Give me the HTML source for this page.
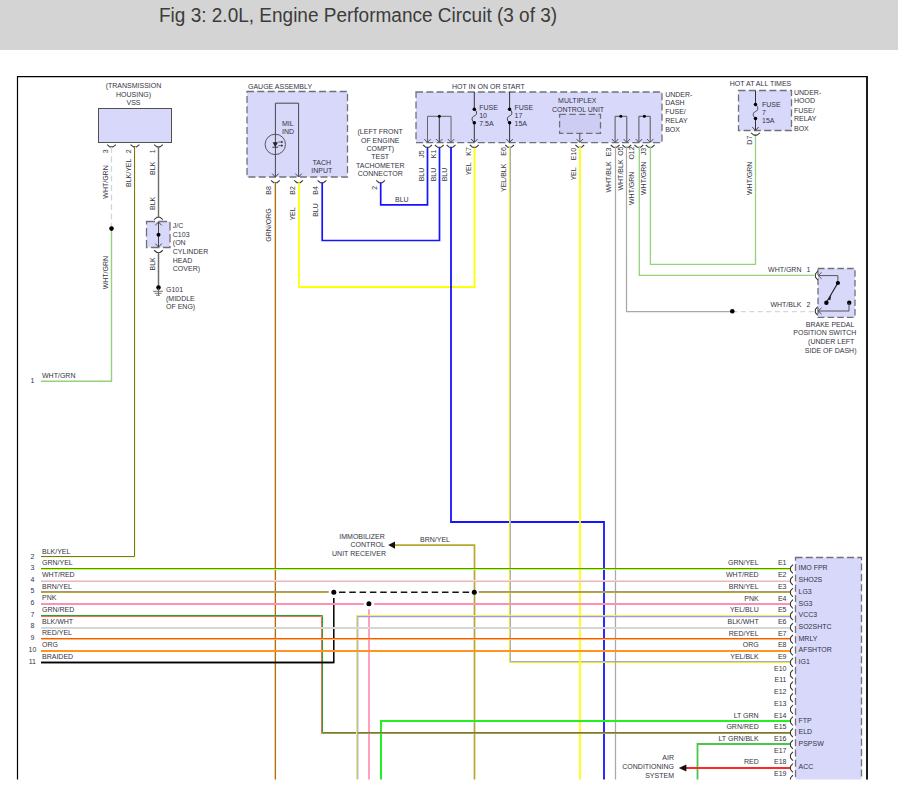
<!DOCTYPE html>
<html><head><meta charset="utf-8"><style>
html,body{margin:0;padding:0;background:#fff;}
body{width:898px;height:798px;overflow:hidden;position:relative;font-family:"Liberation Sans",sans-serif;}
#hdr{position:absolute;left:0;top:0;width:898px;height:50px;background:#d4d4d4;}
#title{position:absolute;left:158.5px;top:3px;font-size:20px;line-height:24px;color:#3c3c3c;white-space:nowrap;transform:scaleX(0.95);transform-origin:0 0;}
svg{position:absolute;left:0;top:0;}
svg text{font-family:"Liberation Sans",sans-serif;}
</style></head><body>
<div id="hdr"><div id="title">Fig 3: 2.0L, Engine Performance Circuit (3 of 3)</div></div>
<svg width="898" height="798" viewBox="0 0 898 798">
<defs><clipPath id="cl"><rect x="0" y="60" width="898" height="719.5"/></clipPath></defs>
<g clip-path="url(#cl)">
<path d="M17.5,900 L17.5,76.6 L867,76.6" fill="none" stroke="#000" stroke-width="1.2"/>
<path d="M867,76 L867,900" fill="none" stroke="#111" stroke-width="1.9"/>
<text x="133.50" y="88.00" text-anchor="middle" font-size="7" fill="#34343f">(TRANSMISSION</text>
<text x="133.50" y="96.70" text-anchor="middle" font-size="7" fill="#34343f">HOUSING)</text>
<text x="133.50" y="105.20" text-anchor="middle" font-size="7" fill="#34343f">VSS</text>
<rect x="98.5" y="108.5" width="73" height="34" fill="#d8d8fb" stroke="#505050" stroke-width="1"/>
<path d="M107.10,144.60 L109.90,146.90 L113.10,146.90 L115.90,144.60" fill="none" stroke="#3a3a3a" stroke-width="1.1" stroke-linejoin="round"/>
<path d="M130.60,144.60 L133.40,146.90 L136.60,146.90 L139.40,144.60" fill="none" stroke="#3a3a3a" stroke-width="1.1" stroke-linejoin="round"/>
<path d="M154.10,144.60 L156.90,146.90 L160.10,146.90 L162.90,144.60" fill="none" stroke="#3a3a3a" stroke-width="1.1" stroke-linejoin="round"/>
<text transform="translate(105.50,151.30) rotate(-90)" x="0" y="2.5" text-anchor="middle" font-size="7" fill="#34343f">3</text>
<text transform="translate(128.80,151.30) rotate(-90)" x="0" y="2.5" text-anchor="middle" font-size="7" fill="#34343f">2</text>
<text transform="translate(152.00,151.30) rotate(-90)" x="0" y="2.5" text-anchor="middle" font-size="7" fill="#34343f">1</text>
<text transform="translate(105.50,182.00) rotate(-90)" x="0" y="2.5" text-anchor="middle" font-size="7" fill="#34343f">WHT/GRN</text>
<text transform="translate(128.80,172.80) rotate(-90)" x="0" y="2.5" text-anchor="middle" font-size="7" fill="#34343f">BLK/YEL</text>
<text transform="translate(152.00,168.30) rotate(-90)" x="0" y="2.5" text-anchor="middle" font-size="7" fill="#34343f">BLK</text>
<text transform="translate(152.00,203.40) rotate(-90)" x="0" y="2.5" text-anchor="middle" font-size="7" fill="#34343f">BLK</text>
<polyline points="111.50,147.00 111.50,228.50" fill="none" stroke="#d4d4d4" stroke-width="1.3" stroke-linecap="butt" stroke-linejoin="miter" stroke-dasharray="6,3.5"/>
<polyline points="111.50,228.50 111.50,381.20 41.00,381.20" fill="none" stroke="#96d27e" stroke-width="1.4" stroke-linecap="butt" stroke-linejoin="miter"/>
<circle cx="111.5" cy="228.6" r="2.3" fill="#000"/>
<text transform="translate(105.50,272.60) rotate(-90)" x="0" y="2.5" text-anchor="middle" font-size="7" fill="#34343f">WHT/GRN</text>
<text x="42.00" y="378.00" text-anchor="start" font-size="7" fill="#34343f">WHT/GRN</text>
<text x="34.50" y="383.00" text-anchor="end" font-size="7" fill="#34343f">1</text>
<polyline points="134.50,146.80 134.50,556.50 41.00,556.50" fill="none" stroke="#707048" stroke-width="1.0" stroke-linecap="butt" stroke-linejoin="miter"/>
<polyline points="135.50,146.80 135.50,557.50 41.00,557.50" fill="none" stroke="#ffff9c" stroke-width="1.0" stroke-linecap="butt" stroke-linejoin="miter"/>
<polyline points="158.50,147.00 158.50,217.30" fill="none" stroke="#6c6c6c" stroke-width="1.4" stroke-linecap="butt" stroke-linejoin="miter"/>
<path d="M154.10,219.60 L156.90,217.30 L160.10,217.30 L162.90,219.60" fill="none" stroke="#3a3a3a" stroke-width="1.1" stroke-linejoin="round"/>
<rect x="146.5" y="221.5" width="23.50" height="26.00" fill="#d8d8fb" stroke="#707078" stroke-width="1.3" stroke-dasharray="8.5,3.5"/>
<polyline points="158.50,221.80 158.50,247.00" fill="none" stroke="#444" stroke-width="1" stroke-linecap="butt" stroke-linejoin="miter"/>
<path d="M155.30,225.40 L158.50,222.00 L161.70,225.40" fill="none" stroke="#444" stroke-width="1"/>
<path d="M155.30,243.60 L158.50,247.00 L161.70,243.60" fill="none" stroke="#444" stroke-width="1"/>
<circle cx="158.5" cy="234.7" r="2.0" fill="#000"/>
<path d="M154.10,250.20 L156.90,252.50 L160.10,252.50 L162.90,250.20" fill="none" stroke="#3a3a3a" stroke-width="1.1" stroke-linejoin="round"/>
<polyline points="158.50,252.60 158.50,287.00" fill="none" stroke="#6c6c6c" stroke-width="1.5" stroke-linecap="butt" stroke-linejoin="miter"/>
<text x="172.80" y="228.30" text-anchor="start" font-size="7" fill="#34343f">J/C</text>
<text x="172.80" y="236.85" text-anchor="start" font-size="7" fill="#34343f">C103</text>
<text x="172.80" y="245.40" text-anchor="start" font-size="7" fill="#34343f">(ON</text>
<text x="172.80" y="253.95" text-anchor="start" font-size="7" fill="#34343f">CYLINDER</text>
<text x="172.80" y="262.50" text-anchor="start" font-size="7" fill="#34343f">HEAD</text>
<text x="172.80" y="271.05" text-anchor="start" font-size="7" fill="#34343f">COVER)</text>
<text transform="translate(152.00,263.90) rotate(-90)" x="0" y="2.5" text-anchor="middle" font-size="7" fill="#34343f">BLK</text>
<circle cx="158.5" cy="287.6" r="2.3" fill="#000"/>
<polyline points="153.00,291.30 163.00,291.30" fill="none" stroke="#555" stroke-width="0.8" stroke-linecap="butt" stroke-linejoin="miter"/>
<polyline points="154.50,293.30 161.50,293.30" fill="none" stroke="#555" stroke-width="0.8" stroke-linecap="butt" stroke-linejoin="miter"/>
<polyline points="156.00,295.30 160.00,295.30" fill="none" stroke="#555" stroke-width="0.8" stroke-linecap="butt" stroke-linejoin="miter"/>
<polyline points="158.50,288.00 158.50,295.30" fill="none" stroke="#555" stroke-width="0.8" stroke-linecap="butt" stroke-linejoin="miter"/>
<text x="166.00" y="292.20" text-anchor="start" font-size="7" fill="#34343f">G101</text>
<text x="166.00" y="300.80" text-anchor="start" font-size="7" fill="#34343f">(MIDDLE</text>
<text x="166.00" y="309.30" text-anchor="start" font-size="7" fill="#34343f">OF ENG)</text>
<text x="248.00" y="89.30" text-anchor="start" font-size="7" fill="#34343f">GAUGE ASSEMBLY</text>
<rect x="247" y="91.5" width="100.50" height="85.50" fill="#d8d8fb" stroke="#707078" stroke-width="1.3" stroke-dasharray="7,3.3"/>
<polyline points="275.40,177.00 275.40,103.20 298.60,103.20 298.60,177.00" fill="none" stroke="#484848" stroke-width="1" stroke-linecap="butt" stroke-linejoin="miter"/>
<path d="M272.20,173.60 L275.40,177.00 L278.60,173.60" fill="none" stroke="#444" stroke-width="1"/>
<path d="M295.40,173.60 L298.60,177.00 L301.80,173.60" fill="none" stroke="#444" stroke-width="1"/>
<circle cx="275.3" cy="144.4" r="10.2" fill="none" stroke="#484848" stroke-width="0.9"/>
<path d="M272.6,142.2 L278.0,142.2 L275.3,147 Z" fill="#222"/>
<polyline points="272.40,147.20 278.20,147.20" fill="none" stroke="#222" stroke-width="0.9" stroke-linecap="butt" stroke-linejoin="miter"/>
<polyline points="278.30,142.00 282.60,142.00" fill="none" stroke="#333" stroke-width="0.7" stroke-linecap="butt" stroke-linejoin="miter"/>
<path d="M281.2,140.7 L283.2,142.0 L281.2,143.3 Z" fill="#333"/>
<polyline points="278.30,145.60 282.60,145.60" fill="none" stroke="#333" stroke-width="0.7" stroke-linecap="butt" stroke-linejoin="miter"/>
<path d="M281.2,144.29999999999998 L283.2,145.6 L281.2,146.9 Z" fill="#333"/>
<text x="282.00" y="126.00" text-anchor="start" font-size="7" fill="#34343f">MIL</text>
<text x="282.00" y="133.90" text-anchor="start" font-size="7" fill="#34343f">IND</text>
<text x="321.80" y="164.70" text-anchor="middle" font-size="7" fill="#34343f">TACH</text>
<text x="321.80" y="172.60" text-anchor="middle" font-size="7" fill="#34343f">INPUT</text>
<path d="M271.00,180.40 L273.80,182.70 L277.00,182.70 L279.80,180.40" fill="none" stroke="#3a3a3a" stroke-width="1.1" stroke-linejoin="round"/>
<path d="M294.20,180.40 L297.00,182.70 L300.20,182.70 L303.00,180.40" fill="none" stroke="#3a3a3a" stroke-width="1.1" stroke-linejoin="round"/>
<path d="M317.60,180.40 L320.40,182.70 L323.60,182.70 L326.40,180.40" fill="none" stroke="#3a3a3a" stroke-width="1.1" stroke-linejoin="round"/>
<text transform="translate(268.70,190.50) rotate(-90)" x="0" y="2.5" text-anchor="middle" font-size="7" fill="#34343f">B8</text>
<text transform="translate(292.20,190.50) rotate(-90)" x="0" y="2.5" text-anchor="middle" font-size="7" fill="#34343f">B2</text>
<text transform="translate(315.50,190.50) rotate(-90)" x="0" y="2.5" text-anchor="middle" font-size="7" fill="#34343f">B4</text>
<text transform="translate(268.70,225.00) rotate(-90)" x="0" y="2.5" text-anchor="middle" font-size="7" fill="#34343f">GRN/ORG</text>
<text transform="translate(292.20,214.00) rotate(-90)" x="0" y="2.5" text-anchor="middle" font-size="7" fill="#34343f">YEL</text>
<text transform="translate(315.50,210.00) rotate(-90)" x="0" y="2.5" text-anchor="middle" font-size="7" fill="#34343f">BLU</text>
<polyline points="274.50,182.60 274.50,790.00" fill="none" stroke="#ffcf9c" stroke-width="1.0" stroke-linecap="butt" stroke-linejoin="miter"/>
<polyline points="275.50,182.60 275.50,790.00" fill="none" stroke="#a07224" stroke-width="1.1" stroke-linecap="butt" stroke-linejoin="miter"/>
<polyline points="299.00,182.60 299.00,287.00 474.50,287.00 474.50,147.00" fill="none" stroke="#ffff00" stroke-width="1.8" stroke-linecap="butt" stroke-linejoin="miter"/>
<polyline points="322.20,182.60 322.20,240.50 439.50,240.50 439.50,147.00" fill="none" stroke="#1414ff" stroke-width="1.7" stroke-linecap="butt" stroke-linejoin="miter"/>
<text x="380.20" y="134.40" text-anchor="middle" font-size="7" fill="#34343f">(LEFT FRONT</text>
<text x="380.20" y="142.73" text-anchor="middle" font-size="7" fill="#34343f">OF ENGINE</text>
<text x="380.20" y="151.06" text-anchor="middle" font-size="7" fill="#34343f">COMPT)</text>
<text x="380.20" y="159.39" text-anchor="middle" font-size="7" fill="#34343f">TEST</text>
<text x="380.20" y="167.72" text-anchor="middle" font-size="7" fill="#34343f">TACHOMETER</text>
<text x="380.20" y="176.05" text-anchor="middle" font-size="7" fill="#34343f">CONNECTOR</text>
<path d="M376.20,180.40 L379.00,182.70 L382.20,182.70 L385.00,180.40" fill="none" stroke="#3a3a3a" stroke-width="1.1" stroke-linejoin="round"/>
<text transform="translate(374.10,187.80) rotate(-90)" x="0" y="2.5" text-anchor="middle" font-size="7" fill="#34343f">2</text>
<polyline points="380.70,182.60 380.70,204.90 427.50,204.90 427.50,147.00" fill="none" stroke="#1414ff" stroke-width="1.7" stroke-linecap="butt" stroke-linejoin="miter"/>
<text x="395.00" y="201.60" text-anchor="start" font-size="7" fill="#34343f">BLU</text>
<text x="452.00" y="89.30" text-anchor="start" font-size="7" fill="#34343f">HOT IN ON OR START</text>
<rect x="416" y="92" width="246.00" height="50.60" fill="#d8d8fb" stroke="#707078" stroke-width="1.3" stroke-dasharray="7,3.3"/>
<polyline points="427.50,142.20 427.50,116.30 451.05,116.30 451.05,142.20" fill="none" stroke="#666" stroke-width="1" stroke-linecap="butt" stroke-linejoin="miter"/>
<polyline points="439.30,116.30 439.30,142.20" fill="none" stroke="#333" stroke-width="1" stroke-linecap="butt" stroke-linejoin="miter"/>
<circle cx="439.3" cy="116.3" r="1.5" fill="#000"/>
<path d="M424.30,139.00 L427.50,142.40 L430.70,139.00" fill="none" stroke="#555" stroke-width="1"/>
<path d="M423.10,145.00 L425.90,147.30 L429.10,147.30 L431.90,145.00" fill="none" stroke="#3a3a3a" stroke-width="1.1" stroke-linejoin="round"/>
<path d="M436.10,139.00 L439.30,142.40 L442.50,139.00" fill="none" stroke="#555" stroke-width="1"/>
<path d="M434.90,145.00 L437.70,147.30 L440.90,147.30 L443.70,145.00" fill="none" stroke="#3a3a3a" stroke-width="1.1" stroke-linejoin="round"/>
<path d="M447.85,139.00 L451.05,142.40 L454.25,139.00" fill="none" stroke="#555" stroke-width="1"/>
<path d="M446.65,145.00 L449.45,147.30 L452.65,147.30 L455.45,145.00" fill="none" stroke="#3a3a3a" stroke-width="1.1" stroke-linejoin="round"/>
<text transform="translate(421.30,154.00) rotate(-90)" x="0" y="2.5" text-anchor="middle" font-size="7" fill="#34343f">J5</text>
<text transform="translate(433.30,154.00) rotate(-90)" x="0" y="2.5" text-anchor="middle" font-size="7" fill="#34343f">K1</text>
<text transform="translate(421.30,174.50) rotate(-90)" x="0" y="2.5" text-anchor="middle" font-size="7" fill="#34343f">BLU</text>
<text transform="translate(433.30,174.50) rotate(-90)" x="0" y="2.5" text-anchor="middle" font-size="7" fill="#34343f">BLU</text>
<text transform="translate(444.80,174.50) rotate(-90)" x="0" y="2.5" text-anchor="middle" font-size="7" fill="#34343f">BLU</text>
<polyline points="451.00,147.00 451.00,522.00 604.00,522.00 604.00,790.00" fill="none" stroke="#1414ff" stroke-width="1.8" stroke-linecap="butt" stroke-linejoin="miter"/>
<polyline points="474.30,91.90 474.30,109.20" fill="none" stroke="#333" stroke-width="1" stroke-linecap="butt" stroke-linejoin="miter"/>
<polyline points="474.30,122.70 474.30,142.20" fill="none" stroke="#333" stroke-width="1" stroke-linecap="butt" stroke-linejoin="miter"/>
<path d="M474.3,109.2 C477.3,111.2 477.3,114.95 474.3,115.95 C471.3,116.95 471.3,120.7 474.3,122.7" fill="none" stroke="#333" stroke-width="0.9"/>
<circle cx="474.3" cy="109.2" r="1.75" fill="#000"/>
<circle cx="474.3" cy="122.7" r="1.75" fill="#000"/>
<path d="M471.10,139.00 L474.30,142.40 L477.50,139.00" fill="none" stroke="#444" stroke-width="1"/>
<path d="M469.90,145.00 L472.70,147.30 L475.90,147.30 L478.70,145.00" fill="none" stroke="#3a3a3a" stroke-width="1.1" stroke-linejoin="round"/>
<text x="479.20" y="110.10" text-anchor="start" font-size="7" fill="#34343f">FUSE</text>
<text x="479.20" y="118.10" text-anchor="start" font-size="7" fill="#34343f">10</text>
<text x="479.20" y="126.00" text-anchor="start" font-size="7" fill="#34343f">7.5A</text>
<text transform="translate(468.90,151.50) rotate(-90)" x="0" y="2.5" text-anchor="middle" font-size="7" fill="#34343f">K7</text>
<text transform="translate(468.90,169.00) rotate(-90)" x="0" y="2.5" text-anchor="middle" font-size="7" fill="#34343f">YEL</text>
<polyline points="509.60,91.90 509.60,109.20" fill="none" stroke="#333" stroke-width="1" stroke-linecap="butt" stroke-linejoin="miter"/>
<polyline points="509.60,122.70 509.60,142.20" fill="none" stroke="#333" stroke-width="1" stroke-linecap="butt" stroke-linejoin="miter"/>
<path d="M509.6,109.2 C512.6,111.2 512.6,114.95 509.6,115.95 C506.6,116.95 506.6,120.7 509.6,122.7" fill="none" stroke="#333" stroke-width="0.9"/>
<circle cx="509.6" cy="109.2" r="1.75" fill="#000"/>
<circle cx="509.6" cy="122.7" r="1.75" fill="#000"/>
<path d="M506.40,139.00 L509.60,142.40 L512.80,139.00" fill="none" stroke="#444" stroke-width="1"/>
<path d="M505.20,145.00 L508.00,147.30 L511.20,147.30 L514.00,145.00" fill="none" stroke="#3a3a3a" stroke-width="1.1" stroke-linejoin="round"/>
<text x="514.50" y="110.10" text-anchor="start" font-size="7" fill="#34343f">FUSE</text>
<text x="514.50" y="118.10" text-anchor="start" font-size="7" fill="#34343f">17</text>
<text x="514.50" y="126.00" text-anchor="start" font-size="7" fill="#34343f">15A</text>
<text transform="translate(503.50,151.50) rotate(-90)" x="0" y="2.5" text-anchor="middle" font-size="7" fill="#34343f">E6</text>
<text transform="translate(503.50,177.80) rotate(-90)" x="0" y="2.5" text-anchor="middle" font-size="7" fill="#34343f">YEL/BLK</text>
<polyline points="510.50,147.00 510.50,661.50 790.60,661.50" fill="none" stroke="#a8acc0" stroke-width="1.0" stroke-linecap="butt" stroke-linejoin="miter"/>
<polyline points="509.50,147.00 509.50,662.50 790.60,662.50" fill="none" stroke="#ecec20" stroke-width="1.0" stroke-linecap="butt" stroke-linejoin="miter"/>
<text x="577.30" y="103.00" text-anchor="middle" font-size="7" fill="#34343f">MULTIPLEX</text>
<text x="578.00" y="112.00" text-anchor="middle" font-size="7" fill="#34343f">CONTROL UNIT</text>
<rect x="559.6" y="114.4" width="40.90" height="19.00" fill="#cdcdf4" stroke="#707078" stroke-width="1.3" stroke-dasharray="6.5,3.2"/>
<polyline points="579.80,133.40 579.80,142.20" fill="none" stroke="#555" stroke-width="1" stroke-linecap="butt" stroke-linejoin="miter"/>
<path d="M576.60,139.00 L579.80,142.40 L583.00,139.00" fill="none" stroke="#555" stroke-width="1"/>
<path d="M575.40,145.00 L578.20,147.30 L581.40,147.30 L584.20,145.00" fill="none" stroke="#3a3a3a" stroke-width="1.1" stroke-linejoin="round"/>
<text transform="translate(573.70,154.00) rotate(-90)" x="0" y="2.5" text-anchor="middle" font-size="7" fill="#34343f">E10</text>
<text transform="translate(573.70,174.00) rotate(-90)" x="0" y="2.5" text-anchor="middle" font-size="7" fill="#34343f">YEL</text>
<polyline points="580.00,147.00 580.00,790.00" fill="none" stroke="#ffff00" stroke-width="1.8" stroke-linecap="butt" stroke-linejoin="miter"/>
<polyline points="615.10,142.20 615.10,116.30 626.80,116.30 626.80,142.20" fill="none" stroke="#555" stroke-width="1" stroke-linecap="butt" stroke-linejoin="miter"/>
<circle cx="620.8" cy="116.3" r="1.5" fill="#000"/>
<polyline points="638.90,142.20 638.90,116.30 650.20,116.30 650.20,142.20" fill="none" stroke="#555" stroke-width="1" stroke-linecap="butt" stroke-linejoin="miter"/>
<circle cx="644.4" cy="116.3" r="1.5" fill="#000"/>
<path d="M611.90,139.00 L615.10,142.40 L618.30,139.00" fill="none" stroke="#555" stroke-width="1"/>
<path d="M610.70,145.00 L613.50,147.30 L616.70,147.30 L619.50,145.00" fill="none" stroke="#3a3a3a" stroke-width="1.1" stroke-linejoin="round"/>
<path d="M623.60,139.00 L626.80,142.40 L630.00,139.00" fill="none" stroke="#555" stroke-width="1"/>
<path d="M622.40,145.00 L625.20,147.30 L628.40,147.30 L631.20,145.00" fill="none" stroke="#3a3a3a" stroke-width="1.1" stroke-linejoin="round"/>
<path d="M635.70,139.00 L638.90,142.40 L642.10,139.00" fill="none" stroke="#555" stroke-width="1"/>
<path d="M634.50,145.00 L637.30,147.30 L640.50,147.30 L643.30,145.00" fill="none" stroke="#3a3a3a" stroke-width="1.1" stroke-linejoin="round"/>
<path d="M647.00,139.00 L650.20,142.40 L653.40,139.00" fill="none" stroke="#555" stroke-width="1"/>
<path d="M645.80,145.00 L648.60,147.30 L651.80,147.30 L654.60,145.00" fill="none" stroke="#3a3a3a" stroke-width="1.1" stroke-linejoin="round"/>
<text transform="translate(608.80,152.00) rotate(-90)" x="0" y="2.5" text-anchor="middle" font-size="7" fill="#34343f">E3</text>
<text transform="translate(608.80,177.00) rotate(-90)" x="0" y="2.5" text-anchor="middle" font-size="7" fill="#34343f">WHT/BLK</text>
<text transform="translate(620.20,151.20) rotate(-90)" x="0" y="2.5" text-anchor="middle" font-size="7" fill="#34343f">O5</text>
<text transform="translate(620.20,175.00) rotate(-90)" x="0" y="2.5" text-anchor="middle" font-size="7" fill="#34343f">WHT/BLK</text>
<text transform="translate(631.60,153.00) rotate(-90)" x="0" y="2.5" text-anchor="middle" font-size="7" fill="#34343f">O12</text>
<text transform="translate(631.60,188.30) rotate(-90)" x="0" y="2.5" text-anchor="middle" font-size="7" fill="#34343f">WHT/GRN</text>
<text transform="translate(643.50,151.50) rotate(-90)" x="0" y="2.5" text-anchor="middle" font-size="7" fill="#34343f">J3</text>
<text transform="translate(643.50,178.30) rotate(-90)" x="0" y="2.5" text-anchor="middle" font-size="7" fill="#34343f">WHT/GRN</text>
<polyline points="615.50,147.00 615.50,790.00" fill="none" stroke="#a8a8a8" stroke-width="1.25" stroke-linecap="butt" stroke-linejoin="miter"/>
<polyline points="626.50,147.00 626.50,311.50 732.30,311.50" fill="none" stroke="#a8a8a8" stroke-width="1.25" stroke-linecap="butt" stroke-linejoin="miter"/>
<polyline points="732.30,311.50 814.00,311.50" fill="none" stroke="#d6d6d6" stroke-width="1.25" stroke-linecap="butt" stroke-linejoin="miter" stroke-dasharray="5,3.5"/>
<circle cx="732.3" cy="311.3" r="2.3" fill="#000"/>
<polyline points="639.30,147.00 639.30,275.30 814.00,275.30" fill="none" stroke="#96d27e" stroke-width="1.3" stroke-linecap="butt" stroke-linejoin="miter"/>
<polyline points="650.40,147.00 650.40,264.30 755.50,264.30 755.50,134.60" fill="none" stroke="#96d27e" stroke-width="1.3" stroke-linecap="butt" stroke-linejoin="miter"/>
<text x="665.20" y="96.80" text-anchor="start" font-size="7" fill="#34343f">UNDER-</text>
<text x="665.20" y="105.00" text-anchor="start" font-size="7" fill="#34343f">DASH</text>
<text x="665.20" y="114.20" text-anchor="start" font-size="7" fill="#34343f">FUSE/</text>
<text x="665.20" y="122.50" text-anchor="start" font-size="7" fill="#34343f">RELAY</text>
<text x="665.20" y="132.20" text-anchor="start" font-size="7" fill="#34343f">BOX</text>
<text x="729.80" y="86.30" text-anchor="start" font-size="7" fill="#34343f">HOT AT ALL TIMES</text>
<rect x="738.5" y="90.5" width="53.00" height="40.00" fill="#d8d8fb" stroke="#707078" stroke-width="1.3" stroke-dasharray="7,3.3"/>
<polyline points="755.50,90.70 755.50,104.60" fill="none" stroke="#333" stroke-width="1" stroke-linecap="butt" stroke-linejoin="miter"/>
<polyline points="755.50,118.40 755.50,130.20" fill="none" stroke="#333" stroke-width="1" stroke-linecap="butt" stroke-linejoin="miter"/>
<path d="M755.5,104.6 C758.5,106.6 758.5,110.5 755.5,111.5 C752.5,112.5 752.5,116.4 755.5,118.4" fill="none" stroke="#333" stroke-width="0.9"/>
<circle cx="755.5" cy="104.6" r="1.75" fill="#000"/>
<circle cx="755.5" cy="118.4" r="1.75" fill="#000"/>
<path d="M752.30,127.00 L755.50,130.40 L758.70,127.00" fill="none" stroke="#444" stroke-width="1"/>
<path d="M751.10,132.80 L753.90,135.10 L757.10,135.10 L759.90,132.80" fill="none" stroke="#3a3a3a" stroke-width="1.1" stroke-linejoin="round"/>
<text x="762.00" y="107.10" text-anchor="start" font-size="7" fill="#34343f">FUSE</text>
<text x="762.00" y="115.10" text-anchor="start" font-size="7" fill="#34343f">7</text>
<text x="762.00" y="122.80" text-anchor="start" font-size="7" fill="#34343f">15A</text>
<text x="794.00" y="95.10" text-anchor="start" font-size="7" fill="#34343f">UNDER-</text>
<text x="794.00" y="103.10" text-anchor="start" font-size="7" fill="#34343f">HOOD</text>
<text x="794.00" y="113.10" text-anchor="start" font-size="7" fill="#34343f">FUSE/</text>
<text x="794.00" y="121.20" text-anchor="start" font-size="7" fill="#34343f">RELAY</text>
<text x="794.00" y="131.20" text-anchor="start" font-size="7" fill="#34343f">BOX</text>
<text transform="translate(749.40,140.20) rotate(-90)" x="0" y="2.5" text-anchor="middle" font-size="7" fill="#34343f">D7</text>
<text transform="translate(749.40,178.30) rotate(-90)" x="0" y="2.5" text-anchor="middle" font-size="7" fill="#34343f">WHT/GRN</text>
<rect x="818" y="268.5" width="37.00" height="48.80" fill="#d8d8fb" stroke="#707078" stroke-width="1.3" stroke-dasharray="6.5,3.2"/>
<path d="M817.80,271.20 L815.40,274.00 L815.40,277.20 L817.80,280.00" fill="none" stroke="#3a3a3a" stroke-width="1.1" stroke-linejoin="round"/>
<path d="M817.80,306.60 L815.40,309.40 L815.40,312.60 L817.80,315.40" fill="none" stroke="#3a3a3a" stroke-width="1.1" stroke-linejoin="round"/>
<polyline points="818.20,275.60 837.90,275.60 837.90,282.90" fill="none" stroke="#555" stroke-width="1" stroke-linecap="butt" stroke-linejoin="miter"/>
<path d="M821.60,272.40 L818.20,275.60 L821.60,278.80" fill="none" stroke="#555" stroke-width="1"/>
<polyline points="837.90,282.90 826.20,302.80" fill="none" stroke="#222" stroke-width="1.1" stroke-linecap="butt" stroke-linejoin="miter"/>
<circle cx="837.9" cy="283.0" r="2.1" fill="#000"/>
<circle cx="826.4" cy="302.8" r="2.2" fill="#000"/>
<circle cx="849.2" cy="302.8" r="2.2" fill="#000"/>
<path d="M827.6,299.6 L831.2,295.2 L830.4,300.2 Z" fill="#222"/>
<polyline points="849.00,302.80 849.00,311.00 818.20,311.00" fill="none" stroke="#555" stroke-width="1" stroke-linecap="butt" stroke-linejoin="miter"/>
<path d="M821.60,307.80 L818.20,311.00 L821.60,314.20" fill="none" stroke="#555" stroke-width="1"/>
<text x="801.50" y="272.00" text-anchor="end" font-size="7" fill="#34343f">WHT/GRN</text>
<text x="806.50" y="272.00" text-anchor="start" font-size="7" fill="#34343f">1</text>
<text x="801.50" y="307.10" text-anchor="end" font-size="7" fill="#34343f">WHT/BLK</text>
<text x="806.50" y="307.10" text-anchor="start" font-size="7" fill="#34343f">2</text>
<text x="854.40" y="327.20" text-anchor="end" font-size="7" fill="#34343f">BRAKE PEDAL</text>
<text x="856.30" y="335.30" text-anchor="end" font-size="7" fill="#34343f">POSITION SWITCH</text>
<text x="854.40" y="344.30" text-anchor="end" font-size="7" fill="#34343f">(UNDER LEFT</text>
<text x="856.50" y="353.00" text-anchor="end" font-size="7" fill="#34343f">SIDE OF DASH)</text>
<text x="42.00" y="554.00" text-anchor="start" font-size="7" fill="#34343f">BLK/YEL</text>
<text x="32.40" y="558.90" text-anchor="middle" font-size="7" fill="#34343f">2</text>
<text x="42.00" y="565.10" text-anchor="start" font-size="7" fill="#34343f">GRN/YEL</text>
<text x="32.40" y="569.90" text-anchor="middle" font-size="7" fill="#34343f">3</text>
<text x="42.00" y="576.80" text-anchor="start" font-size="7" fill="#34343f">WHT/RED</text>
<text x="32.40" y="581.60" text-anchor="middle" font-size="7" fill="#34343f">4</text>
<text x="42.00" y="588.50" text-anchor="start" font-size="7" fill="#34343f">BRN/YEL</text>
<text x="32.40" y="593.30" text-anchor="middle" font-size="7" fill="#34343f">5</text>
<text x="42.00" y="600.20" text-anchor="start" font-size="7" fill="#34343f">PNK</text>
<text x="32.40" y="605.00" text-anchor="middle" font-size="7" fill="#34343f">6</text>
<text x="42.00" y="611.90" text-anchor="start" font-size="7" fill="#34343f">GRN/RED</text>
<text x="32.40" y="616.70" text-anchor="middle" font-size="7" fill="#34343f">7</text>
<text x="42.00" y="623.60" text-anchor="start" font-size="7" fill="#34343f">BLK/WHT</text>
<text x="32.40" y="628.40" text-anchor="middle" font-size="7" fill="#34343f">8</text>
<text x="42.00" y="635.30" text-anchor="start" font-size="7" fill="#34343f">RED/YEL</text>
<text x="32.40" y="640.10" text-anchor="middle" font-size="7" fill="#34343f">9</text>
<text x="42.00" y="647.00" text-anchor="start" font-size="7" fill="#34343f">ORG</text>
<text x="32.40" y="651.80" text-anchor="middle" font-size="7" fill="#34343f">10</text>
<text x="42.00" y="658.70" text-anchor="start" font-size="7" fill="#34343f">BRAIDED</text>
<text x="32.40" y="663.50" text-anchor="middle" font-size="7" fill="#34343f">11</text>
<polyline points="369.00,609.20 369.00,790.00" fill="none" stroke="#ff90b2" stroke-width="1.7" stroke-linecap="butt" stroke-linejoin="miter"/>
<polyline points="474.50,790.00 474.50,545.20 395.00,545.20" fill="none" stroke="#b4a830" stroke-width="1.7" stroke-linecap="butt" stroke-linejoin="miter"/>
<path d="M388.2,545.1 L395.0,541.4 L395.0,548.8 Z" fill="#111"/>
<polyline points="697.50,790.00 697.50,744.00 790.60,744.00" fill="none" stroke="#48c848" stroke-width="1.8" stroke-linecap="butt" stroke-linejoin="miter"/>
<polyline points="381.00,790.00 381.00,721.00 790.60,721.00" fill="none" stroke="#22f022" stroke-width="2" stroke-linecap="butt" stroke-linejoin="miter"/>
<polyline points="41.00,615.50 322.50,615.50 322.50,732.50 790.60,732.50" fill="none" stroke="#22a822" stroke-width="1.0" stroke-linecap="butt" stroke-linejoin="miter"/>
<polyline points="41.00,616.50 321.50,616.50 321.50,733.50 790.60,733.50" fill="none" stroke="#f07060" stroke-width="1.0" stroke-linecap="butt" stroke-linejoin="miter"/>
<polyline points="356.60,790.00 356.60,615.50 790.60,615.50" fill="none" stroke="#f2ee50" stroke-width="1.2" stroke-linecap="butt" stroke-linejoin="miter"/>
<polyline points="357.80,790.00 357.80,616.60 790.60,616.60" fill="none" stroke="#9c9ce4" stroke-width="1.1" stroke-linecap="butt" stroke-linejoin="miter"/>
<polyline points="41.00,662.50 333.80,662.50 333.80,597.90" fill="none" stroke="#000" stroke-width="1.5" stroke-linecap="butt" stroke-linejoin="miter"/>
<polyline points="41.00,568.50 790.60,568.50" fill="none" stroke="#22a822" stroke-width="1.0" stroke-linecap="butt" stroke-linejoin="miter"/>
<polyline points="41.00,569.50 790.60,569.50" fill="none" stroke="#f0f020" stroke-width="1.0" stroke-linecap="butt" stroke-linejoin="miter"/>
<polyline points="41.00,580.50 790.60,580.50" fill="none" stroke="#e2e2da" stroke-width="1.0" stroke-linecap="butt" stroke-linejoin="miter"/>
<polyline points="41.00,581.50 790.60,581.50" fill="none" stroke="#f8b0c0" stroke-width="1.0" stroke-linecap="butt" stroke-linejoin="miter"/>
<polyline points="41.00,591.50 328.80,591.50" fill="none" stroke="#a89870" stroke-width="1.0" stroke-linecap="butt" stroke-linejoin="miter"/>
<polyline points="41.00,592.50 328.80,592.50" fill="none" stroke="#b8aa30" stroke-width="1.0" stroke-linecap="butt" stroke-linejoin="miter"/>
<polyline points="478.80,591.50 790.60,591.50" fill="none" stroke="#a89870" stroke-width="1.0" stroke-linecap="butt" stroke-linejoin="miter"/>
<polyline points="478.80,592.50 790.60,592.50" fill="none" stroke="#b8aa30" stroke-width="1.0" stroke-linecap="butt" stroke-linejoin="miter"/>
<polyline points="339.00,592.20 470.00,592.20" fill="none" stroke="#151515" stroke-width="1.6" stroke-linecap="butt" stroke-linejoin="miter" stroke-dasharray="6.5,3.8"/>
<polyline points="41.00,604.00 363.90,604.00" fill="none" stroke="#ff90b2" stroke-width="2.0" stroke-linecap="butt" stroke-linejoin="miter"/>
<polyline points="374.20,604.00 790.60,604.00" fill="none" stroke="#ff90b2" stroke-width="2.0" stroke-linecap="butt" stroke-linejoin="miter"/>
<polyline points="41.00,628.00 790.60,628.00" fill="none" stroke="#d6d6d6" stroke-width="2.0" stroke-linecap="butt" stroke-linejoin="miter"/>
<polyline points="41.00,638.50 790.60,638.50" fill="none" stroke="#ff4848" stroke-width="1.0" stroke-linecap="butt" stroke-linejoin="miter"/>
<polyline points="41.00,639.50 790.60,639.50" fill="none" stroke="#ffc828" stroke-width="1.0" stroke-linecap="butt" stroke-linejoin="miter"/>
<polyline points="41.00,651.00 790.60,651.00" fill="none" stroke="#ff9422" stroke-width="2.0" stroke-linecap="butt" stroke-linejoin="miter"/>
<polyline points="41.00,662.50 333.80,662.50" fill="none" stroke="#000" stroke-width="1.5" stroke-linecap="butt" stroke-linejoin="miter"/>
<circle cx="333.8" cy="592.2" r="2.5" fill="#000"/>
<circle cx="368.9" cy="603.8" r="2.5" fill="#000"/>
<circle cx="474.3" cy="592.2" r="2.5" fill="#000"/>
<text x="384.80" y="539.10" text-anchor="end" font-size="7" fill="#34343f">IMMOBILIZER</text>
<text x="384.80" y="547.30" text-anchor="end" font-size="7" fill="#34343f">CONTROL</text>
<text x="386.00" y="556.00" text-anchor="end" font-size="7" fill="#34343f">UNIT RECEIVER</text>
<text x="420.00" y="542.40" text-anchor="start" font-size="7" fill="#34343f">BRN/YEL</text>
<polyline points="686.00,768.00 790.60,768.00" fill="none" stroke="#ff2828" stroke-width="2" stroke-linecap="butt" stroke-linejoin="miter"/>
<path d="M678.8,768 L686.4,764.4 L686.4,771.6 Z" fill="#111"/>
<text x="674.00" y="760.20" text-anchor="end" font-size="7" fill="#34343f">AIR</text>
<text x="674.00" y="769.20" text-anchor="end" font-size="7" fill="#34343f">CONDITIONING</text>
<text x="674.00" y="778.20" text-anchor="end" font-size="7" fill="#34343f">SYSTEM</text>
<rect x="795.5" y="557.5" width="66.00" height="342.50" fill="#d8d8fb" stroke="#707078" stroke-width="1.3" stroke-dasharray="7,3.3"/>
<path d="M792.90,564.60 L790.50,567.40 L790.50,570.60 L792.90,573.40" fill="none" stroke="#3a3a3a" stroke-width="1.1" stroke-linejoin="round"/>
<text x="786.50" y="565.40" text-anchor="end" font-size="7" fill="#34343f">E1</text>
<text x="758.70" y="565.40" text-anchor="end" font-size="7" fill="#34343f">GRN/YEL</text>
<text x="798.50" y="570.40" text-anchor="start" font-size="7" fill="#34343f">IMO FPR</text>
<path d="M792.90,576.30 L790.50,579.10 L790.50,582.30 L792.90,585.10" fill="none" stroke="#3a3a3a" stroke-width="1.1" stroke-linejoin="round"/>
<text x="786.50" y="577.10" text-anchor="end" font-size="7" fill="#34343f">E2</text>
<text x="758.70" y="577.10" text-anchor="end" font-size="7" fill="#34343f">WHT/RED</text>
<text x="798.50" y="582.10" text-anchor="start" font-size="7" fill="#34343f">SHO2S</text>
<path d="M792.90,588.00 L790.50,590.80 L790.50,594.00 L792.90,596.80" fill="none" stroke="#3a3a3a" stroke-width="1.1" stroke-linejoin="round"/>
<text x="786.50" y="588.80" text-anchor="end" font-size="7" fill="#34343f">E3</text>
<text x="758.70" y="588.80" text-anchor="end" font-size="7" fill="#34343f">BRN/YEL</text>
<text x="798.50" y="593.80" text-anchor="start" font-size="7" fill="#34343f">LG3</text>
<path d="M792.90,599.70 L790.50,602.50 L790.50,605.70 L792.90,608.50" fill="none" stroke="#3a3a3a" stroke-width="1.1" stroke-linejoin="round"/>
<text x="786.50" y="600.50" text-anchor="end" font-size="7" fill="#34343f">E4</text>
<text x="758.70" y="600.50" text-anchor="end" font-size="7" fill="#34343f">PNK</text>
<text x="798.50" y="605.50" text-anchor="start" font-size="7" fill="#34343f">SG3</text>
<path d="M792.90,611.40 L790.50,614.20 L790.50,617.40 L792.90,620.20" fill="none" stroke="#3a3a3a" stroke-width="1.1" stroke-linejoin="round"/>
<text x="786.50" y="612.20" text-anchor="end" font-size="7" fill="#34343f">E5</text>
<text x="758.70" y="612.20" text-anchor="end" font-size="7" fill="#34343f">YEL/BLU</text>
<text x="798.50" y="617.20" text-anchor="start" font-size="7" fill="#34343f">VCC3</text>
<path d="M792.90,623.10 L790.50,625.90 L790.50,629.10 L792.90,631.90" fill="none" stroke="#3a3a3a" stroke-width="1.1" stroke-linejoin="round"/>
<text x="786.50" y="623.90" text-anchor="end" font-size="7" fill="#34343f">E6</text>
<text x="758.70" y="623.90" text-anchor="end" font-size="7" fill="#34343f">BLK/WHT</text>
<text x="798.50" y="628.90" text-anchor="start" font-size="7" fill="#34343f">SO2SHTC</text>
<path d="M792.90,634.80 L790.50,637.60 L790.50,640.80 L792.90,643.60" fill="none" stroke="#3a3a3a" stroke-width="1.1" stroke-linejoin="round"/>
<text x="786.50" y="635.60" text-anchor="end" font-size="7" fill="#34343f">E7</text>
<text x="758.70" y="635.60" text-anchor="end" font-size="7" fill="#34343f">RED/YEL</text>
<text x="798.50" y="640.60" text-anchor="start" font-size="7" fill="#34343f">MRLY</text>
<path d="M792.90,646.50 L790.50,649.30 L790.50,652.50 L792.90,655.30" fill="none" stroke="#3a3a3a" stroke-width="1.1" stroke-linejoin="round"/>
<text x="786.50" y="647.30" text-anchor="end" font-size="7" fill="#34343f">E8</text>
<text x="758.70" y="647.30" text-anchor="end" font-size="7" fill="#34343f">ORG</text>
<text x="798.50" y="652.30" text-anchor="start" font-size="7" fill="#34343f">AFSHTOR</text>
<path d="M792.90,658.20 L790.50,661.00 L790.50,664.20 L792.90,667.00" fill="none" stroke="#3a3a3a" stroke-width="1.1" stroke-linejoin="round"/>
<text x="786.50" y="659.00" text-anchor="end" font-size="7" fill="#34343f">E9</text>
<text x="758.70" y="659.00" text-anchor="end" font-size="7" fill="#34343f">YEL/BLK</text>
<text x="798.50" y="664.00" text-anchor="start" font-size="7" fill="#34343f">IG1</text>
<path d="M792.90,669.90 L790.50,672.70 L790.50,675.90 L792.90,678.70" fill="none" stroke="#3a3a3a" stroke-width="1.1" stroke-linejoin="round"/>
<text x="786.50" y="670.70" text-anchor="end" font-size="7" fill="#34343f">E10</text>
<path d="M792.90,681.60 L790.50,684.40 L790.50,687.60 L792.90,690.40" fill="none" stroke="#3a3a3a" stroke-width="1.1" stroke-linejoin="round"/>
<text x="786.50" y="682.40" text-anchor="end" font-size="7" fill="#34343f">E11</text>
<path d="M792.90,693.30 L790.50,696.10 L790.50,699.30 L792.90,702.10" fill="none" stroke="#3a3a3a" stroke-width="1.1" stroke-linejoin="round"/>
<text x="786.50" y="694.10" text-anchor="end" font-size="7" fill="#34343f">E12</text>
<path d="M792.90,705.00 L790.50,707.80 L790.50,711.00 L792.90,713.80" fill="none" stroke="#3a3a3a" stroke-width="1.1" stroke-linejoin="round"/>
<text x="786.50" y="705.80" text-anchor="end" font-size="7" fill="#34343f">E13</text>
<path d="M792.90,716.70 L790.50,719.50 L790.50,722.70 L792.90,725.50" fill="none" stroke="#3a3a3a" stroke-width="1.1" stroke-linejoin="round"/>
<text x="786.50" y="717.50" text-anchor="end" font-size="7" fill="#34343f">E14</text>
<text x="758.70" y="717.50" text-anchor="end" font-size="7" fill="#34343f">LT GRN</text>
<text x="798.50" y="722.50" text-anchor="start" font-size="7" fill="#34343f">FTP</text>
<path d="M792.90,728.40 L790.50,731.20 L790.50,734.40 L792.90,737.20" fill="none" stroke="#3a3a3a" stroke-width="1.1" stroke-linejoin="round"/>
<text x="786.50" y="729.20" text-anchor="end" font-size="7" fill="#34343f">E15</text>
<text x="758.70" y="729.20" text-anchor="end" font-size="7" fill="#34343f">GRN/RED</text>
<text x="798.50" y="734.20" text-anchor="start" font-size="7" fill="#34343f">ELD</text>
<path d="M792.90,740.10 L790.50,742.90 L790.50,746.10 L792.90,748.90" fill="none" stroke="#3a3a3a" stroke-width="1.1" stroke-linejoin="round"/>
<text x="786.50" y="740.90" text-anchor="end" font-size="7" fill="#34343f">E16</text>
<text x="758.70" y="740.90" text-anchor="end" font-size="7" fill="#34343f">LT GRN/BLK</text>
<text x="798.50" y="745.90" text-anchor="start" font-size="7" fill="#34343f">PSPSW</text>
<path d="M792.90,751.80 L790.50,754.60 L790.50,757.80 L792.90,760.60" fill="none" stroke="#3a3a3a" stroke-width="1.1" stroke-linejoin="round"/>
<text x="786.50" y="752.60" text-anchor="end" font-size="7" fill="#34343f">E17</text>
<path d="M792.90,763.50 L790.50,766.30 L790.50,769.50 L792.90,772.30" fill="none" stroke="#3a3a3a" stroke-width="1.1" stroke-linejoin="round"/>
<text x="786.50" y="764.30" text-anchor="end" font-size="7" fill="#34343f">E18</text>
<text x="758.70" y="764.30" text-anchor="end" font-size="7" fill="#34343f">RED</text>
<text x="798.50" y="769.30" text-anchor="start" font-size="7" fill="#34343f">ACC</text>
<path d="M792.90,775.20 L790.50,778.00 L790.50,781.20 L792.90,784.00" fill="none" stroke="#3a3a3a" stroke-width="1.1" stroke-linejoin="round"/>
<text x="786.50" y="776.00" text-anchor="end" font-size="7" fill="#34343f">E19</text>
</g></svg></body></html>
